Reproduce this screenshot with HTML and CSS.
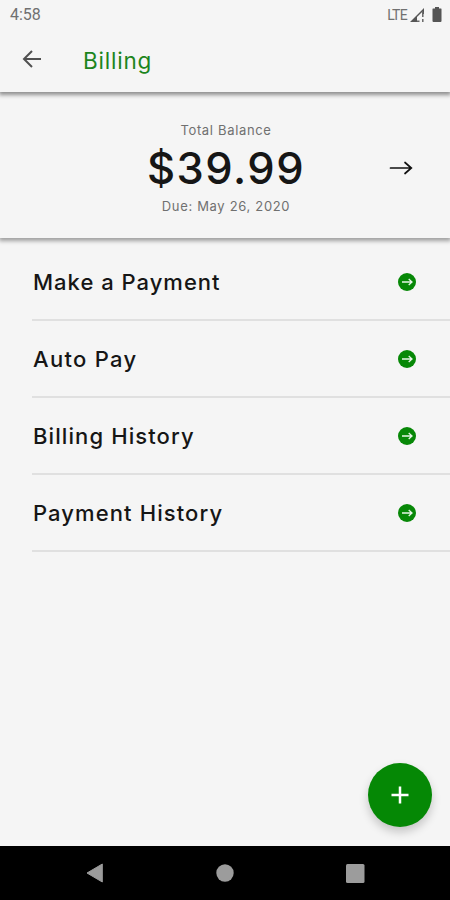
FILE: index.html
```html
<!DOCTYPE html>
<html lang="en">

<head>
    <meta charset="UTF-8">
    <meta name="viewport" content="width=device-width, initial-scale=1.0">
    <title>Billing</title>
    <link rel="stylesheet" href="styles.css">
</head>

<body>
    <header class="top">
        <div class="status">
            <span class="time">4:58</span>
            <span class="network">LTE</span>
            <svg class="signal" width="15" height="14" viewBox="0 0 15 14">
                <path d="M0 14L14 0V6H12.6V3.4L7 9V14Z" fill="#555" />
                <path d="M12.8 4V9M12.8 11V14M7 13.3H9.5" fill="none" stroke="#666" stroke-width="1.5" />
            </svg>
            <svg class="battery" width="10" height="15" viewBox="0 0 10 15">
                <path d="M3 0H7V1.5H9Q9.5 1.5 9.5 2V14Q9.5 15 8.5 15H1.5Q.5 15 .5 14V2Q.5 1.5 1 1.5H3Z" fill="#555" />
            </svg>
        </div>
        <div class="bar">
            <svg class="back" width="20" height="18" viewBox="0 0 20 18">
                <path d="M19 9H2M10 1L2 9L10 17" fill="none" stroke="#505050" stroke-width="2" />
            </svg>
            <h1 class="title">Billing</h1>
        </div>
    </header>

    <section class="balance">
        <div class="summary">
            <div class="label">Total Balance</div>
            <div class="amount">$39.99</div>
            <div class="due">Due: May 26, 2020</div>
        </div>
        <svg class="next" width="24" height="14" viewBox="0 0 24 14">
            <path d="M1.5 7H22M16 1.5L22.3 7L16 12.5" fill="none" stroke="#111" stroke-width="1.7" stroke-linecap="round" />
        </svg>
    </section>

    <main class="menu">
        <div class="item">
            <span class="name make">Make a Payment</span>
            <svg class="go" width="18" height="18" viewBox="0 0 18 18">
                <circle cx="9" cy="9" r="9" fill="#078807" />
                <path d="M4 9H14M10.7 6L14 9L10.7 12" fill="none" stroke="#e8f5e8" stroke-width="1.3" />
            </svg>
        </div>
        <div class="item">
            <span class="name auto">Auto Pay</span>
            <svg class="go" width="18" height="18" viewBox="0 0 18 18">
                <circle cx="9" cy="9" r="9" fill="#078807" />
                <path d="M4 9H14M10.7 6L14 9L10.7 12" fill="none" stroke="#e8f5e8" stroke-width="1.3" />
            </svg>
        </div>
        <div class="item">
            <span class="name billing">Billing History</span>
            <svg class="go" width="18" height="18" viewBox="0 0 18 18">
                <circle cx="9" cy="9" r="9" fill="#078807" />
                <path d="M4 9H14M10.7 6L14 9L10.7 12" fill="none" stroke="#e8f5e8" stroke-width="1.3" />
            </svg>
        </div>
        <div class="item">
            <span class="name payment">Payment History</span>
            <svg class="go" width="18" height="18" viewBox="0 0 18 18">
                <circle cx="9" cy="9" r="9" fill="#078807" />
                <path d="M4 9H14M10.7 6L14 9L10.7 12" fill="none" stroke="#e8f5e8" stroke-width="1.3" />
            </svg>
        </div>
    </main>

    <button class="add" aria-label="Add">
        <svg width="18" height="18" viewBox="0 0 18 18">
            <path d="M9 .5V17.5M.5 9H17.5" fill="none" stroke="#fff" stroke-width="2.5" />
        </svg>
    </button>

    <nav class="nav">
        <svg width="18" height="20" viewBox="0 0 18 20">
            <path d="M1 10L16.3 1V19Z" fill="#9c9c9c" stroke="#9c9c9c" stroke-linejoin="round" />
        </svg>
        <svg width="18" height="18" viewBox="0 0 18 18">
            <circle cx="9" cy="9" r="8.7" fill="#9c9c9c" />
        </svg>
        <svg width="19" height="19" viewBox="0 0 19 19">
            <rect width="18.5" height="19" rx="1.5" fill="#9c9c9c" />
        </svg>
    </nav>
</body>

</html>
```

FILE: styles.css
```css
* {
    box-sizing: border-box;
}

body {
    margin: 0;
    height: 900px;
    display: flex;
    flex-direction: column;
    overflow: hidden;
    background-color: #f5f5f5;
    font-family: Inter, "Liberation Sans", sans-serif;
    color: #161616;
}

svg {
    display: block;
    flex-shrink: 0;
}

.top {
    height: 92px;
    flex-shrink: 0;
    box-shadow: 0 2px 4px 1px rgba(0, 0, 0, 0.42);
}

.status {
    height: 29px;
    display: flex;
    align-items: center;
    padding: 0 8px 0 10px;
    font-family: Roboto, sans-serif;
    color: #707070;
}

.time {
    margin-right: auto;
    font-size: 16px;
}

.network {
    font-size: 14px;
    letter-spacing: -0.7px;
    margin-right: 3px;
}

.battery {
    margin-left: 7px;
}

.bar {
    display: flex;
    align-items: center;
    height: 63px;
    padding: 0 0 3px 22px;
}

.title {
    margin: 2px 0 0 41px;
    font-size: 22.5px;
    font-weight: 400;
    letter-spacing: 0.8px;
    color: #1d851d;
}

.balance {
    height: 146px;
    flex-shrink: 0;
    display: grid;
    grid-template-columns: 1fr 24px;
    align-items: center;
    padding: 5px 37px 0 0;
    box-shadow: 0 2px 4px 1px rgba(0, 0, 0, 0.35);
    clip-path: inset(0 0 -12px 0);
}

.summary {
    padding-left: 63px;
    text-align: center;
    white-space: nowrap;
}

.label,
.due {
    font-size: 13px;
    line-height: 18px;
    letter-spacing: 0.67px;
    color: #707070;
}

.label {
    padding-top: 1px;
}

.amount {
    font-size: 43.5px;
    line-height: 58px;
    font-weight: 500;
    letter-spacing: 1.5px;
}

.menu {
    flex: 1;
    padding: 6px 0 0 32px;
}

.item {
    height: 77px;
    display: flex;
    align-items: center;
    justify-content: space-between;
    padding: 0 34px 0 1px;
    border-bottom: 2px solid #e0e0e0;
}

.name {
    font-size: 22px;
    font-weight: 450;
    letter-spacing: 1.1px;
}

.make {
    letter-spacing: 1px;
}

.auto {
    letter-spacing: 1.3px;
}

.add {
    position: absolute;
    left: 368px;
    top: 763px;
    width: 64px;
    height: 64px;
    display: flex;
    align-items: center;
    justify-content: center;
    padding: 0;
    border: none;
    border-radius: 50%;
    background-color: #058805;
    box-shadow: 0 5px 10px rgba(0, 0, 0, 0.2);
}

.nav {
    height: 54px;
    flex-shrink: 0;
    display: flex;
    align-items: center;
    justify-content: space-between;
    padding: 0 85px 0 86px;
    background-color: #000;
}
```
